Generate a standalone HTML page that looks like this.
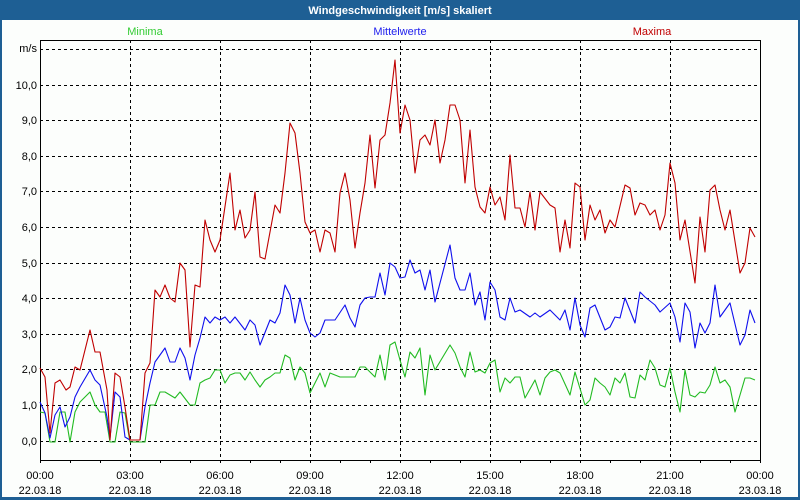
<!DOCTYPE html>
<html><head><meta charset="utf-8"><style>
html,body{margin:0;padding:0;width:800px;height:500px;overflow:hidden;background:#1e5f94}
svg{display:block}
text{font-family:"Liberation Sans",sans-serif;font-size:11px}
</style></head><body>
<svg width="800" height="500" xmlns="http://www.w3.org/2000/svg">
<rect x="0" y="0" width="800" height="500" fill="#1e5f94"/>
<rect x="2" y="20" width="796" height="477" fill="#fcfefc"/>
<text x="400" y="14" fill="#fff" text-anchor="middle" style="font-weight:bold;font-size:11px">Windgeschwindigkeit [m/s] skaliert</text>
<text x="145" y="35" fill="#33cc33" text-anchor="middle">Minima</text>
<text x="400" y="35" fill="#2020ee" text-anchor="middle">Mittelwerte</text>
<text x="652" y="35" fill="#c00000" text-anchor="middle">Maxima</text>
<g stroke="#000" stroke-width="1" stroke-dasharray="3,3" fill="none">
<path d="M40 49.5H760M40 85.5H760M40 120.5H760M40 156.5H760M40 191.5H760M40 227.5H760M40 263.5H760M40 298.5H760M40 334.5H760M40 369.5H760M40 405.5H760M40 441.5H760"/>
<path d="M130.5 40V460M220.5 40V460M310.5 40V460M400.5 40V460M490.5 40V460M580.5 40V460M670.5 40V460"/>
</g>
<path d="M40.5 40V460.5H760.5V40M40 40.5H760" stroke="#000" fill="none"/>
<path d="M70.5 460v3M100.5 460v3M130.5 460v3M160.5 460v3M190.5 460v3M220.5 460v3M250.5 460v3M280.5 460v3M310.5 460v3M340.5 460v3M370.5 460v3M400.5 460v3M430.5 460v3M460.5 460v3M490.5 460v3M520.5 460v3M550.5 460v3M580.5 460v3M610.5 460v3M640.5 460v3M670.5 460v3M700.5 460v3M730.5 460v3M760.5 460v3M40.5 460v3" stroke="#000"/>
<g fill="#000" text-anchor="end">
<text x="37" y="52">m/s</text>
<text x="37" y="89">10,0</text><text x="37" y="124">9,0</text><text x="37" y="160">8,0</text>
<text x="37" y="195">7,0</text><text x="37" y="231">6,0</text><text x="37" y="267">5,0</text>
<text x="37" y="302">4,0</text><text x="37" y="338">3,0</text><text x="37" y="373">2,0</text>
<text x="37" y="409">1,0</text><text x="37" y="445">0,0</text>
</g>
<g fill="#000" text-anchor="middle">
<text x="40" y="479">00:00</text><text x="40" y="494">22.03.18</text>
<text x="130" y="479">03:00</text><text x="130" y="494">22.03.18</text>
<text x="220" y="479">06:00</text><text x="220" y="494">22.03.18</text>
<text x="310" y="479">09:00</text><text x="310" y="494">22.03.18</text>
<text x="400" y="479">12:00</text><text x="400" y="494">22.03.18</text>
<text x="490" y="479">15:00</text><text x="490" y="494">22.03.18</text>
<text x="580" y="479">18:00</text><text x="580" y="494">22.03.18</text>
<text x="670" y="479">21:00</text><text x="670" y="494">22.03.18</text>
<text x="760" y="479">00:00</text><text x="760" y="494">23.03.18</text>
</g>
<g fill="none" stroke-width="1.1" stroke-linejoin="round">
<polyline stroke="#22bb22" points="40,412 45,413 50,442 55,442 60,412 65,412 70,442 75,412 80,402 90,392 95,405 100,412 105,412 110,442 115,442 120,412 125,413 130,442 145,442 150,405 155,405 160,392 165,392 175,398 180,392 190,405 195,405 200,383 205,380 210,378 215,370 220,370 225,383 230,375 235,373 240,373 245,380 250,372 255,380 260,387 265,380 270,377 275,373 280,373 285,355 290,358 295,380 300,367 305,373 310,393 320,373 325,387 330,373 340,377 355,377 360,367 365,367 375,377 380,355 385,380 390,345 395,342 400,360 405,377 410,352 415,358 420,348 425,395 430,355 435,370 450,345 455,353 460,367 465,377 470,352 475,372 480,370 485,373 490,363 495,360 500,392 505,378 510,383 515,377 520,377 525,398 535,380 540,395 545,378 550,372 555,370 560,373 570,395 575,372 585,405 590,400 595,378 600,383 605,387 610,395 615,378 620,383 625,373 630,397 635,398 640,375 645,380 650,360 655,368 660,385 665,387 670,368 675,392 680,412 685,370 690,395 695,397 700,392 705,393 710,385 715,367 720,383 725,380 730,387 735,412 740,395 745,378 750,378 755,380"/>
<polyline stroke="#1010ee" points="40,402 45,413 50,438 55,415 60,407 65,427 70,417 75,397 80,387 90,370 95,380 100,385 107,417 110,438 115,392 120,397 125,437 130,440 140,440 145,407 150,383 155,362 165,348 170,362 175,362 180,348 185,358 190,380 195,355 200,338 205,317 210,323 215,317 220,320 225,317 230,323 235,317 245,330 250,320 255,325 260,345 270,320 275,323 280,313 285,285 290,295 295,323 300,298 305,320 310,333 315,337 320,333 325,320 335,320 345,305 350,318 355,327 360,305 365,298 370,297 375,297 380,273 385,295 390,263 395,267 400,278 405,277 410,260 415,273 420,270 425,290 430,270 435,302 450,245 455,278 460,290 465,290 470,273 475,305 480,292 485,320 490,282 495,290 500,317 505,320 510,298 515,312 520,310 530,317 535,313 540,317 550,310 560,320 565,310 570,330 575,298 580,325 585,337 590,308 595,305 605,330 610,327 615,317 620,318 625,298 635,323 640,292 645,297 655,305 660,312 670,303 675,317 680,342 685,303 690,312 695,348 700,323 705,333 710,323 715,285 720,317 730,303 740,345 745,335 750,310 755,323"/>
<polyline stroke="#c00000" points="40,368 45,377 50,433 55,383 60,380 66,390 70,387 75,367 80,370 90,330 95,352 100,352 107,390 110,440 115,373 120,377 125,407 130,440 140,440 145,373 150,363 155,290 160,297 165,285 170,298 175,302 180,263 185,270 190,347 195,285 200,287 205,220 210,240 215,252 220,240 230,173 235,230 240,210 245,238 250,230 255,192 260,257 265,259 275,205 280,213 285,173 290,123 295,133 300,173 305,222 310,233 315,230 320,252 325,230 330,233 335,252 340,193 345,173 350,200 355,248 360,213 365,183 370,135 375,188 380,140 385,135 390,103 395,60 400,133 405,105 410,120 415,173 420,140 425,135 430,145 435,120 440,163 445,140 450,105 455,105 460,120 465,183 470,130 475,187 480,207 485,213 490,187 495,205 500,197 505,220 510,155 515,208 520,208 525,227 530,192 535,230 540,192 550,205 555,208 560,252 565,220 570,248 575,183 580,187 585,240 590,205 595,220 600,210 605,233 610,220 615,227 625,185 630,188 635,215 640,203 645,205 650,215 655,210 660,230 665,215 670,163 675,183 680,240 685,220 695,283 700,217 705,252 710,190 715,185 720,210 725,230 730,210 740,273 745,263 750,228 755,237"/>
</g>
</svg>
</body></html>
